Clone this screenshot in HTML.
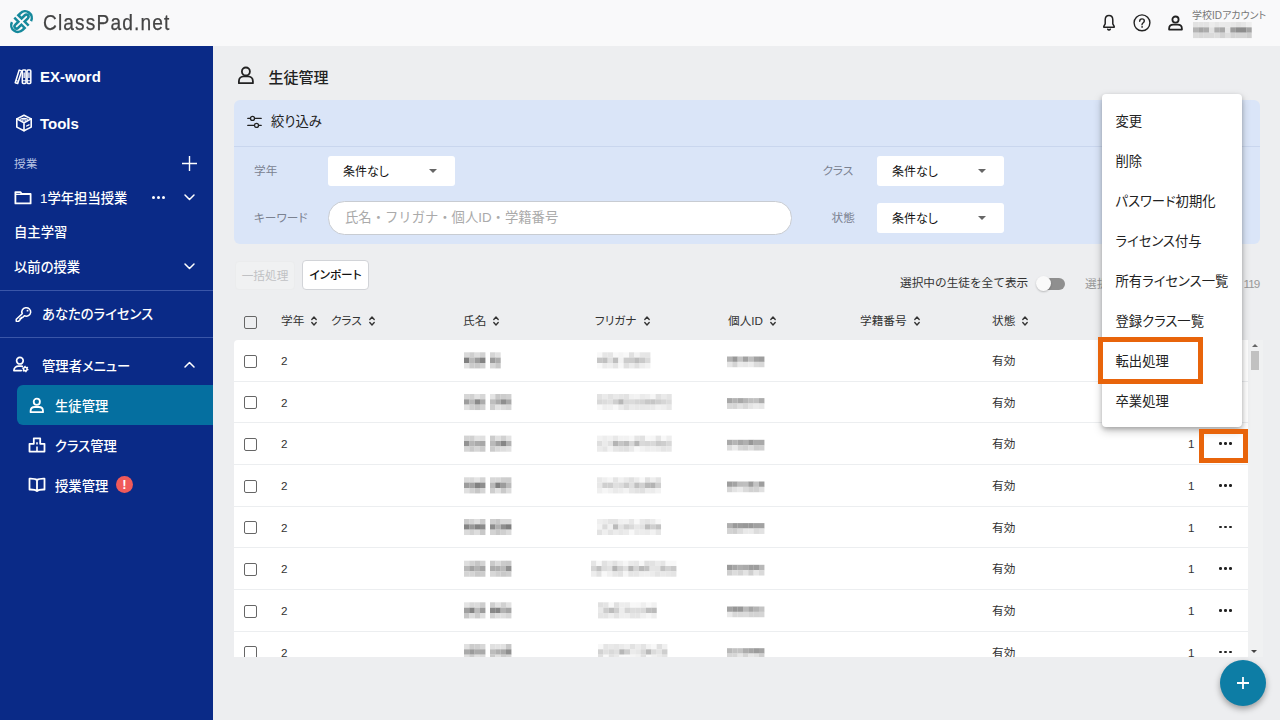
<!DOCTYPE html>
<html lang="ja">
<head>
<meta charset="utf-8">
<title>ClassPad.net</title>
<style>
*{box-sizing:border-box;margin:0;padding:0}
html,body{width:1280px;height:720px;overflow:hidden}
body{position:relative;background:#edeef0;font-family:"Liberation Sans","Noto Sans CJK JP",sans-serif;color:#222;font-size:13px;font-feature-settings:"palt"}
.abs{position:absolute}
.t{position:absolute;white-space:nowrap;line-height:1}
svg{position:absolute;overflow:visible}
/* header */
#hdr{left:0;top:0;width:1280px;height:46px;background:#f9f9fa}
#logo{left:43px;top:12px;font-size:22px;color:#444;-webkit-text-stroke:.25px #444;letter-spacing:1.3px;transform:scaleX(.87);transform-origin:0 0}
/* sidebar */
#side{left:0;top:46px;width:213px;height:674px;background:#0a2a87}
#side .t{color:#fff}
.sb{font-weight:bold;font-size:15px}
.sj{font-size:13.33px;font-weight:500;margin-top:2px}
.hr{position:absolute;left:0;width:213px;height:1px;background:#3a56a8}
#active{left:17px;top:385px;width:196px;height:40px;background:#056fa0;border-radius:6px 0 0 6px}
/* main */
#title{left:268.400px;top:69.500px;font-size:15px;color:#222;font-weight:500}
#filter{left:234px;top:100px;width:1026px;height:143.500px;background:#dae5f8;border-radius:6px}
#fdiv{left:234px;top:146px;width:1026px;height:1px;background:#c9d6ee}
.lbl{font-size:11.67px;color:#7b8291}
.sel{position:absolute;width:127px;height:30px;background:#fff;border-radius:3px}
.sel .t{left:15px;top:9.800px;font-size:12px;color:#111}
.sel i{position:absolute;left:100.500px;top:12.500px;border:4px solid transparent;border-top:4px solid #666;border-bottom:0}
#search{left:328px;top:201px;width:464px;height:33.500px;background:#fff;border:1px solid #c8ccd2;border-radius:16.5px}
#search .t{font-feature-settings:normal;left:16px;top:8.500px;font-size:13.33px;color:#aaa}
.btn{position:absolute;height:29px;border-radius:4px;font-size:11.67px;text-align:center;line-height:27px;white-space:nowrap}
/* table */
#tbl{left:234px;top:340px;width:1014px;height:317px;background:#fff;overflow:hidden;border-radius:4px 0 0 0}
.row{position:absolute;left:0;width:1014px;height:41.7px;border-bottom:1px solid #eceef0}
.cb{position:absolute;width:13px;height:13px;border:1.5px solid #666;border-radius:2px;background:#fff}
.th{font-size:11.67px;color:#333}
.td{font-size:11.67px;color:#333}
.blur{position:absolute;filter:blur(1.5px)}
.mos{filter:blur(.6px)}
/* menu */
#menu{left:1102px;top:94px;width:140px;height:333px;background:#fff;border-radius:4px;box-shadow:0 4px 10px rgba(0,0,0,.22),0 2px 4px rgba(0,0,0,.2)}
#menu .t{left:13.500px;font-size:13.330px;color:#222}
.ob{position:absolute;border:5px solid #e8640b}
#fab{left:1220px;top:660px;width:46px;height:46px;border-radius:50%;background:#0d7da5;box-shadow:0 3px 6px rgba(0,0,0,.35)}
.sa{display:inline-block;position:relative;width:6px;height:10px;margin-left:7px;vertical-align:-1px}
.sa svg{left:0;top:0}
.dots{position:absolute;width:14px;height:3px}
.dots b{position:absolute;top:0;width:2.6px;height:2.6px;border-radius:50%;background:#222}
.dots.w b{background:#fff;width:3.2px;height:3.2px}.dots b:nth-child(1){left:0}.dots b:nth-child(2){left:5px}.dots b:nth-child(3){left:10px}
</style>
</head>
<body>
<!-- HEADER -->
<div id="hdr" class="abs"></div>
<svg style="left:0;top:0" width="46" height="46" viewBox="0 0 46 46" fill="none" stroke="#16899c" stroke-width="2.35" stroke-linejoin="miter">
<g transform="translate(21.5,21.6) rotate(-45) scale(1.07)"><path id="lk" d="M2.1 7.4V2H6.4A2 2 0 0 0 6.400-2H2.100V-6.300H4.700A6.300 6.300 0 0 1 6.600 6"/><path d="M2.1 7.4V2H6.4A2 2 0 0 0 6.400-2H2.100V-6.300H4.700A6.300 6.300 0 0 1 6.600 6" transform="rotate(180)"/></g>
</svg>
<div id="logo" class="t">ClassPad.net</div>
<!-- bell -->
<svg style="left:1101.500px;top:14px" width="14" height="18" viewBox="0 0 14 18" fill="none" stroke="#222" stroke-width="1.500" stroke-linejoin="round" stroke-linecap="round">
<path d="M7 1.600c-2.400 0-3.800 1.900-3.800 4.400v3.800L1.800 12.400v.8h10.400v-.8L10.800 9.800V6c0-2.500-1.400-4.400-3.800-4.400z"/><path d="M5.700 15.200c.3.600.7.900 1.300.9s1-.3 1.300-.9"/>
</svg>
<!-- help -->
<svg style="left:1133px;top:14px" width="18" height="18" viewBox="0 0 18 18" fill="none" stroke="#222" stroke-width="1.400" stroke-linecap="round">
<circle cx="9" cy="8.800" r="7.900"/><path d="M6.7 7.2c0-1.4 1-2.3 2.3-2.3s2.3.9 2.3 2.1c0 1.7-2.3 1.8-2.3 3.7"/><circle cx="9" cy="12.9" r=".5" fill="#222" stroke-width=".6"/>
</svg>
<!-- user -->
<svg style="left:1166.600px;top:15.300px" width="17" height="17" viewBox="0 0 17 17" fill="none" stroke="#222" stroke-width="1.800" stroke-linejoin="round">
<circle cx="8.500" cy="4.600" r="3.100"/><path d="M2.100 14.600v-.9c0-2.600 2-4 4.200-4h4.400c2.200 0 4.200 1.400 4.200 4v.9z"/>
</svg>
<div class="t" style="left:1192px;top:11px;font-size:10px;color:#777">学校IDアカウント</div>
<svg class="mos" style="left:1192.500px;top:21.500px" width="59" height="16" viewBox="0 0 59 16"><rect x="0.00" y="0.00" width="5.43" height="5.43" fill="rgb(226,226,226)"/><rect x="5.33" y="0.00" width="5.43" height="5.43" fill="rgb(227,227,227)"/><rect x="10.66" y="0.00" width="5.43" height="5.43" fill="rgb(227,227,227)"/><rect x="15.99" y="0.00" width="5.43" height="5.43" fill="rgb(236,236,236)"/><rect x="21.32" y="0.00" width="5.43" height="5.43" fill="rgb(230,230,230)"/><rect x="26.65" y="0.00" width="5.43" height="5.43" fill="rgb(234,234,234)"/><rect x="31.98" y="0.00" width="5.43" height="5.43" fill="rgb(233,233,233)"/><rect x="37.31" y="0.00" width="5.43" height="5.43" fill="rgb(231,231,231)"/><rect x="42.64" y="0.00" width="5.43" height="5.43" fill="rgb(226,226,226)"/><rect x="47.97" y="0.00" width="5.43" height="5.43" fill="rgb(230,230,230)"/><rect x="53.30" y="0.00" width="5.43" height="5.43" fill="rgb(238,238,238)"/><rect x="0.00" y="5.33" width="5.43" height="5.43" fill="rgb(180,180,180)"/><rect x="5.33" y="5.33" width="5.43" height="5.43" fill="rgb(165,165,165)"/><rect x="10.66" y="5.33" width="5.43" height="5.43" fill="rgb(172,172,172)"/><rect x="15.99" y="5.33" width="5.43" height="5.43" fill="rgb(226,226,226)"/><rect x="21.32" y="5.33" width="5.43" height="5.43" fill="rgb(174,174,174)"/><rect x="26.65" y="5.33" width="5.43" height="5.43" fill="rgb(168,168,168)"/><rect x="31.98" y="5.33" width="5.43" height="5.43" fill="rgb(231,231,231)"/><rect x="37.31" y="5.33" width="5.43" height="5.43" fill="rgb(157,157,157)"/><rect x="42.64" y="5.33" width="5.43" height="5.43" fill="rgb(142,142,142)"/><rect x="47.97" y="5.33" width="5.43" height="5.43" fill="rgb(141,141,141)"/><rect x="53.30" y="5.33" width="5.43" height="5.43" fill="rgb(163,163,163)"/><rect x="0.00" y="10.66" width="5.43" height="5.43" fill="rgb(219,219,219)"/><rect x="5.33" y="10.66" width="5.43" height="5.43" fill="rgb(215,215,215)"/><rect x="10.66" y="10.66" width="5.43" height="5.43" fill="rgb(217,217,217)"/><rect x="15.99" y="10.66" width="5.43" height="5.43" fill="rgb(218,218,218)"/><rect x="21.32" y="10.66" width="5.43" height="5.43" fill="rgb(221,221,221)"/><rect x="26.65" y="10.66" width="5.43" height="5.43" fill="rgb(210,210,210)"/><rect x="31.98" y="10.66" width="5.43" height="5.43" fill="rgb(222,222,222)"/><rect x="37.31" y="10.66" width="5.43" height="5.43" fill="rgb(210,210,210)"/><rect x="42.64" y="10.66" width="5.43" height="5.43" fill="rgb(212,212,212)"/><rect x="47.97" y="10.66" width="5.43" height="5.43" fill="rgb(212,212,212)"/><rect x="53.30" y="10.66" width="5.43" height="5.43" fill="rgb(205,205,205)"/></svg>
<!-- SIDEBAR -->
<div id="side" class="abs">
<!-- exword icon -->
<svg style="left:14.3px;top:23px" width="18" height="16" viewBox="0 0 18 16" fill="none" stroke="#fff" stroke-width="1.5" stroke-linejoin="round">
<path d="M5.2 1.100l2.500.800-4 12.600-2.500-.800z"/><path d="M1.900 11.400l2.500.800" stroke-width="1.100"/><rect x="8.300" y="1.100" width="3.700" height="13.400" rx=".9"/><rect x="13.100" y="1.100" width="3.700" height="13.400" rx=".9"/><path d="M8.300 11.800h3.700M13.100 11.800h3.700" stroke-width="1.100"/><path d="M10.150 3.600v5.400M14.950 3.600v5.400" stroke-width="1.300"/>
</svg>
<div class="t sb" style="left:40px;top:23px">EX-word</div>
<!-- tools icon -->
<svg style="left:15px;top:68px" width="18" height="18" viewBox="0 0 18 18" fill="none" stroke="#fff" stroke-width="1.600" stroke-linejoin="round" stroke-linecap="round">
<path d="M9 1.300l7.200 3.600v8.200L9 16.700l-7.200-3.600V4.900z"/><path d="M1.800 4.900L9 8.700l7.200-3.800M9 8.700v8"/><path d="M5.300 5.300a5.200 2.700 0 0 1 7.400 0M7.100 6.300a2.700 1.400 0 0 1 3.800 0" stroke-width="1.100"/><path d="M11.600 12l2.400-1.200" stroke-width="1.300"/>
</svg>
<div class="t sb" style="left:40px;top:70px">Tools</div>
<div class="t" style="left:14px;top:112px;font-size:11.67px;color:#b9c3e3">授業</div>
<svg style="left:182px;top:110px" width="15" height="15" viewBox="0 0 15 15" stroke="#fff" stroke-width="1.4"><path d="M7.5 0v15M0 7.5h15"/></svg>
<!-- folder -->
<svg style="left:14px;top:144px" width="18" height="15" viewBox="0 0 18 15" fill="none" stroke="#fff" stroke-width="1.800" stroke-linejoin="round">
<path d="M1.400 2.100h5l1.400 1.900h8.800v9.400H1.400z"/><path d="M1.400 4.300h7" stroke-width="1.400"/>
</svg>
<div class="t sj" style="left:40px;top:144px">1学年担当授業</div>
<div class="dots w" style="left:152px;top:149.500px"><b></b><b></b><b></b></div>
<svg style="left:184px;top:148px" width="11" height="7" viewBox="0 0 11 7" fill="none" stroke="#fff" stroke-width="1.5" stroke-linecap="round" stroke-linejoin="round"><path d="M1 1l4.5 4.5L10 1"/></svg>
<div class="t sj" style="left:14px;top:178px">自主学習</div>
<div class="t sj" style="left:14px;top:213px">以前の授業</div>
<svg style="left:184px;top:217px" width="11" height="7" viewBox="0 0 11 7" fill="none" stroke="#fff" stroke-width="1.5" stroke-linecap="round" stroke-linejoin="round"><path d="M1 1l4.5 4.5L10 1"/></svg>
<div class="hr" style="top:244px"></div>
<!-- key -->
<svg style="left:14.5px;top:260px" width="18" height="18" viewBox="0 0 18 18" fill="none" stroke="#fff" stroke-width="1.600" stroke-linejoin="round">
<g transform="scale(.97 .92)"><path d="M7.420 8.320A4.600 4.600 0 1 1 9.680 10.580L7.900 12.400H6.600V13.700H5.300V15L3.600 16.700H1.300V14.400Z"/><circle cx="12.900" cy="5.100" r="1" fill="#fff" stroke="none"/></g>
</svg>
<div class="t sj" style="left:42px;top:260px">あなたのライセンス</div>
<div class="hr" style="top:291px"></div>
<!-- admin icon -->
<svg style="left:12px;top:309px" width="18" height="18" viewBox="0 0 18 18" fill="none" stroke="#fff" stroke-width="1.700" stroke-linejoin="round" stroke-linecap="round">
<circle cx="7.900" cy="5.700" r="3.300"/><path d="M10.400 11.300c-.5-.1-1-.2-1.500-.2H6.800c-2.800 0-4.900 1.900-4.900 4.500h7.300"/>
<circle cx="13.300" cy="14" r="2.500" stroke-width="1.500" stroke-dasharray="1.300 1.320" stroke-linecap="butt"/><circle cx="13.300" cy="14" r="1.800" stroke-width="1.500"/>
</svg>
<div class="t sj" style="left:42px;top:312px">管理者メニュー</div>
<svg style="left:184px;top:315px" width="11" height="7" viewBox="0 0 11 7" fill="none" stroke="#fff" stroke-width="1.5" stroke-linecap="round" stroke-linejoin="round"><path d="M1 6l4.5-4.5L10 6"/></svg>
<div id="active" class="abs" style="top:339px"></div>
<svg style="left:29px;top:351px" width="16" height="17" viewBox="0 0 16 17" fill="none" stroke="#fff" stroke-width="1.800" stroke-linejoin="round">
<circle cx="7.800" cy="4.800" r="3.100"/><path d="M1.600 15.200v-1.200c0-2.600 2-4 4.200-4h4c2.200 0 4.200 1.400 4.200 4v1.200z"/>
</svg>
<div class="t sj" style="left:55px;top:352px">生徒管理</div>
<!-- class icon -->
<svg style="left:28px;top:391px" width="18" height="16" viewBox="0 0 18 16" fill="none" stroke="#fff" stroke-width="1.800" stroke-linejoin="round">
<path d="M5.800 1.300h6.400v5.500h4.300v7.800H1.500V6.800h4.300z"/><path d="M9 14.600V9.500" stroke-width="1.600"/><path d="M9 5.200v2.400" stroke-width="1.600"/>
</svg>
<div class="t sj" style="left:55px;top:392px">クラス管理</div>
<!-- book icon -->
<svg style="left:28px;top:431px" width="18" height="16" viewBox="0 0 18 16" fill="none" stroke="#fff" stroke-width="1.800" stroke-linejoin="round">
<path d="M9 3C7.700 2 5.200 1.600 1.500 1.700v10.800c3.700-.1 6.200.300 7.500 1.500 1.300-1.200 3.800-1.600 7.500-1.500V1.700C12.800 1.600 10.300 2 9 3zM9 3v11"/>
</svg>
<div class="t sj" style="left:55px;top:432px">授業管理</div>
<div class="abs" style="left:116px;top:430px;width:17px;height:17px;border-radius:50%;background:#f05a5a"></div>
<div class="t" style="left:116px;top:432px;width:17px;text-align:center;font-size:13px;font-weight:bold">!</div>
</div>
<!-- MAIN -->
<svg style="left:237px;top:66px" width="18" height="19" viewBox="0 0 18 19" fill="none" stroke="#222" stroke-width="1.800" stroke-linejoin="round">
<circle cx="8.900" cy="5.500" r="4"/><path d="M1.900 17.200v-2c0-3 2.300-4.800 4.800-4.800h4.400c2.500 0 4.800 1.800 4.800 4.800v2z"/>
</svg>
<div id="title" class="t">生徒管理</div>
<div id="filter" class="abs"></div>
<div id="fdiv" class="abs"></div>
<!-- filter icon -->
<svg style="left:247px;top:115px" width="15" height="14" viewBox="0 0 15 14" fill="none" stroke="#222" stroke-width="1.3" stroke-linecap="round">
<path d="M.8 3.4h2.600M7.600 3.400h6.600M.8 10.400h6.600M11.600 10.400h2.600"/><circle cx="5.500" cy="3.400" r="2"/><circle cx="9.500" cy="10.400" r="2"/>
</svg>
<div class="t" style="left:271px;top:115px;font-size:13.33px;color:#222">絞り込み</div>
<div class="t lbl" style="left:254px;top:165px">学年</div>
<div class="sel" style="left:328px;top:156px"><div class="t">条件なし</div><i></i></div>
<div class="t lbl" style="left:254px;top:212px">キーワード</div>
<div id="search" class="abs"><div class="t">氏名・フリガナ・個人ID・学籍番号</div></div>
<div class="t lbl" style="left:822.500px;top:165px">クラス</div>
<div class="sel" style="left:877px;top:156px"><div class="t">条件なし</div><i></i></div>
<div class="t lbl" style="left:831.500px;top:211.500px">状態</div>
<div class="sel" style="left:877px;top:203px"><div class="t">条件なし</div><i></i></div>
<!-- buttons -->
<div class="btn" style="left:235px;top:261px;width:60px;background:#f0f1f2;color:#c0c1c4;border:1px solid #ebeced">一括処理</div>
<div class="btn" style="left:302px;top:260px;width:67px;height:30px;background:#fff;color:#111;border:1px solid #d2d4d8;line-height:28px;font-weight:500">インポート</div>
<div class="t" style="left:900px;top:277px;font-size:11.67px;color:#333;font-feature-settings:normal">選択中の生徒を全て表示</div>
<div class="abs" style="left:1040px;top:277.500px;width:25px;height:12px;border-radius:6px;background:#8f8f8f"></div>
<div class="abs" style="left:1035.500px;top:276px;width:15px;height:15px;border-radius:50%;background:#fafafa;box-shadow:0 1px 2px rgba(0,0,0,.22)"></div>
<div class="t" style="left:1085px;top:278px;font-size:11.670px;color:#999">選択中</div>
<div class="t" style="left:1243.500px;top:278px;font-size:11.670px;letter-spacing:-.9px;color:#999">119</div>
<!-- table header -->
<div class="cb" style="left:244px;top:316px;background:transparent"></div>
<div class="t th" style="left:281px;top:315px">学年<span class="sa"><svg width="6" height="10" viewBox="0 0 6 10" fill="none" stroke="#333" stroke-width="1.400" stroke-linecap="round" stroke-linejoin="round"><path d="M.8 3.400L3 1.100 5.200 3.400M.8 6.600L3 8.900 5.200 6.600"/></svg></span></div>
<div class="t th" style="left:331px;top:315px">クラス<span class="sa"><svg width="6" height="10" viewBox="0 0 6 10" fill="none" stroke="#333" stroke-width="1.400" stroke-linecap="round" stroke-linejoin="round"><path d="M.8 3.400L3 1.100 5.200 3.400M.8 6.600L3 8.900 5.200 6.600"/></svg></span></div>
<div class="t th" style="left:463px;top:315px">氏名<span class="sa"><svg width="6" height="10" viewBox="0 0 6 10" fill="none" stroke="#333" stroke-width="1.400" stroke-linecap="round" stroke-linejoin="round"><path d="M.8 3.400L3 1.100 5.200 3.400M.8 6.600L3 8.900 5.200 6.600"/></svg></span></div>
<div class="t th" style="left:595px;top:315px">フリガナ<span class="sa"><svg width="6" height="10" viewBox="0 0 6 10" fill="none" stroke="#333" stroke-width="1.400" stroke-linecap="round" stroke-linejoin="round"><path d="M.8 3.400L3 1.100 5.200 3.400M.8 6.600L3 8.900 5.200 6.600"/></svg></span></div>
<div class="t th" style="left:728px;top:315px">個人ID<span class="sa"><svg width="6" height="10" viewBox="0 0 6 10" fill="none" stroke="#333" stroke-width="1.400" stroke-linecap="round" stroke-linejoin="round"><path d="M.8 3.400L3 1.100 5.200 3.400M.8 6.600L3 8.900 5.200 6.600"/></svg></span></div>
<div class="t th" style="left:860px;top:315px">学籍番号<span class="sa"><svg width="6" height="10" viewBox="0 0 6 10" fill="none" stroke="#333" stroke-width="1.400" stroke-linecap="round" stroke-linejoin="round"><path d="M.8 3.400L3 1.100 5.200 3.400M.8 6.600L3 8.900 5.200 6.600"/></svg></span></div>
<div class="t th" style="left:992px;top:315px">状態<span class="sa"><svg width="6" height="10" viewBox="0 0 6 10" fill="none" stroke="#333" stroke-width="1.400" stroke-linecap="round" stroke-linejoin="round"><path d="M.8 3.400L3 1.100 5.200 3.400M.8 6.600L3 8.900 5.200 6.600"/></svg></span></div>
<div id="tbl" class="abs">
<svg class="mos" style="left:0;top:0" width="1012" height="330" viewBox="0 0 1012 330"><rect x="230.0" y="12.3" width="5.43" height="5.43" fill="rgb(217,217,217)"/><rect x="235.3" y="12.3" width="5.43" height="5.43" fill="rgb(206,206,206)"/><rect x="240.7" y="12.3" width="5.43" height="5.43" fill="rgb(221,221,221)"/><rect x="246.0" y="12.3" width="5.43" height="5.43" fill="rgb(209,209,209)"/><rect x="230.0" y="17.6" width="5.43" height="5.43" fill="rgb(128,128,128)"/><rect x="235.3" y="17.6" width="5.43" height="5.43" fill="rgb(184,184,184)"/><rect x="240.7" y="17.6" width="5.43" height="5.43" fill="rgb(156,156,156)"/><rect x="246.0" y="17.6" width="5.43" height="5.43" fill="rgb(131,131,131)"/><rect x="230.0" y="23.0" width="5.43" height="5.43" fill="rgb(226,226,226)"/><rect x="235.3" y="23.0" width="5.43" height="5.43" fill="rgb(203,203,203)"/><rect x="240.7" y="23.0" width="5.43" height="5.43" fill="rgb(201,201,201)"/><rect x="246.0" y="23.0" width="5.43" height="5.43" fill="rgb(209,209,209)"/><rect x="256.0" y="12.3" width="5.43" height="5.43" fill="rgb(213,213,213)"/><rect x="261.3" y="12.3" width="5.43" height="5.43" fill="rgb(225,225,225)"/><rect x="256.0" y="17.6" width="5.43" height="5.43" fill="rgb(156,156,156)"/><rect x="261.3" y="17.6" width="5.43" height="5.43" fill="rgb(173,173,173)"/><rect x="256.0" y="23.0" width="5.43" height="5.43" fill="rgb(215,215,215)"/><rect x="261.3" y="23.0" width="5.43" height="5.43" fill="rgb(201,201,201)"/><rect x="363.0" y="12.3" width="5.43" height="5.43" fill="rgb(248,248,248)"/><rect x="368.3" y="12.3" width="5.43" height="5.43" fill="rgb(230,230,230)"/><rect x="373.7" y="12.3" width="5.43" height="5.43" fill="rgb(229,229,229)"/><rect x="379.0" y="12.3" width="5.43" height="5.43" fill="rgb(248,248,248)"/><rect x="384.3" y="12.3" width="5.43" height="5.43" fill="rgb(244,244,244)"/><rect x="389.6" y="12.3" width="5.43" height="5.43" fill="rgb(248,248,248)"/><rect x="395.0" y="12.3" width="5.43" height="5.43" fill="rgb(224,224,224)"/><rect x="400.3" y="12.3" width="5.43" height="5.43" fill="rgb(242,242,242)"/><rect x="405.6" y="12.3" width="5.43" height="5.43" fill="rgb(230,230,230)"/><rect x="411.0" y="12.3" width="5.43" height="5.43" fill="rgb(229,229,229)"/><rect x="363.0" y="17.6" width="5.43" height="5.43" fill="rgb(198,198,198)"/><rect x="368.3" y="17.6" width="5.43" height="5.43" fill="rgb(192,192,192)"/><rect x="373.7" y="17.6" width="5.43" height="5.43" fill="rgb(223,223,223)"/><rect x="379.0" y="17.6" width="5.43" height="5.43" fill="rgb(191,191,191)"/><rect x="384.3" y="17.6" width="5.43" height="5.43" fill="rgb(242,242,242)"/><rect x="389.6" y="17.6" width="5.43" height="5.43" fill="rgb(204,204,204)"/><rect x="395.0" y="17.6" width="5.43" height="5.43" fill="rgb(203,203,203)"/><rect x="400.3" y="17.6" width="5.43" height="5.43" fill="rgb(189,189,189)"/><rect x="405.6" y="17.6" width="5.43" height="5.43" fill="rgb(201,201,201)"/><rect x="411.0" y="17.6" width="5.43" height="5.43" fill="rgb(218,218,218)"/><rect x="363.0" y="23.0" width="5.43" height="5.43" fill="rgb(248,248,248)"/><rect x="368.3" y="23.0" width="5.43" height="5.43" fill="rgb(235,235,235)"/><rect x="373.7" y="23.0" width="5.43" height="5.43" fill="rgb(239,239,239)"/><rect x="379.0" y="23.0" width="5.43" height="5.43" fill="rgb(229,229,229)"/><rect x="384.3" y="23.0" width="5.43" height="5.43" fill="rgb(247,247,247)"/><rect x="389.6" y="23.0" width="5.43" height="5.43" fill="rgb(224,224,224)"/><rect x="395.0" y="23.0" width="5.43" height="5.43" fill="rgb(235,235,235)"/><rect x="400.3" y="23.0" width="5.43" height="5.43" fill="rgb(224,224,224)"/><rect x="405.6" y="23.0" width="5.43" height="5.43" fill="rgb(237,237,237)"/><rect x="411.0" y="23.0" width="5.43" height="5.43" fill="rgb(242,242,242)"/><rect x="493.0" y="16.5" width="5.43" height="5.43" fill="rgb(178,178,178)"/><rect x="498.3" y="16.5" width="5.43" height="5.43" fill="rgb(152,152,152)"/><rect x="503.7" y="16.5" width="5.43" height="5.43" fill="rgb(195,195,195)"/><rect x="509.0" y="16.5" width="5.43" height="5.43" fill="rgb(161,161,161)"/><rect x="514.3" y="16.5" width="5.43" height="5.43" fill="rgb(189,189,189)"/><rect x="519.6" y="16.5" width="5.43" height="5.43" fill="rgb(162,162,162)"/><rect x="525.0" y="16.5" width="5.43" height="5.43" fill="rgb(157,157,157)"/><rect x="493.0" y="21.8" width="5.43" height="5.43" fill="rgb(229,229,229)"/><rect x="498.3" y="21.8" width="5.43" height="5.43" fill="rgb(212,212,212)"/><rect x="503.7" y="21.8" width="5.43" height="5.43" fill="rgb(234,234,234)"/><rect x="509.0" y="21.8" width="5.43" height="5.43" fill="rgb(231,231,231)"/><rect x="514.3" y="21.8" width="5.43" height="5.43" fill="rgb(235,235,235)"/><rect x="519.6" y="21.8" width="5.43" height="5.43" fill="rgb(219,219,219)"/><rect x="525.0" y="21.8" width="5.43" height="5.43" fill="rgb(216,216,216)"/><rect x="230.0" y="54.0" width="5.43" height="5.43" fill="rgb(214,214,214)"/><rect x="235.3" y="54.0" width="5.43" height="5.43" fill="rgb(209,209,209)"/><rect x="240.7" y="54.0" width="5.43" height="5.43" fill="rgb(226,226,226)"/><rect x="246.0" y="54.0" width="5.43" height="5.43" fill="rgb(214,214,214)"/><rect x="230.0" y="59.3" width="5.43" height="5.43" fill="rgb(157,157,157)"/><rect x="235.3" y="59.3" width="5.43" height="5.43" fill="rgb(184,184,184)"/><rect x="240.7" y="59.3" width="5.43" height="5.43" fill="rgb(138,138,138)"/><rect x="246.0" y="59.3" width="5.43" height="5.43" fill="rgb(172,172,172)"/><rect x="230.0" y="64.6" width="5.43" height="5.43" fill="rgb(225,225,225)"/><rect x="235.3" y="64.6" width="5.43" height="5.43" fill="rgb(207,207,207)"/><rect x="240.7" y="64.6" width="5.43" height="5.43" fill="rgb(199,199,199)"/><rect x="246.0" y="64.6" width="5.43" height="5.43" fill="rgb(211,211,211)"/><rect x="256.0" y="54.0" width="5.43" height="5.43" fill="rgb(228,228,228)"/><rect x="261.3" y="54.0" width="5.43" height="5.43" fill="rgb(200,200,200)"/><rect x="266.7" y="54.0" width="5.43" height="5.43" fill="rgb(204,204,204)"/><rect x="272.0" y="54.0" width="5.43" height="5.43" fill="rgb(208,208,208)"/><rect x="256.0" y="59.3" width="5.43" height="5.43" fill="rgb(190,190,190)"/><rect x="261.3" y="59.3" width="5.43" height="5.43" fill="rgb(171,171,171)"/><rect x="266.7" y="59.3" width="5.43" height="5.43" fill="rgb(143,143,143)"/><rect x="272.0" y="59.3" width="5.43" height="5.43" fill="rgb(168,168,168)"/><rect x="256.0" y="64.6" width="5.43" height="5.43" fill="rgb(206,206,206)"/><rect x="261.3" y="64.6" width="5.43" height="5.43" fill="rgb(227,227,227)"/><rect x="266.7" y="64.6" width="5.43" height="5.43" fill="rgb(220,220,220)"/><rect x="272.0" y="64.6" width="5.43" height="5.43" fill="rgb(215,215,215)"/><rect x="363.0" y="54.0" width="5.43" height="5.43" fill="rgb(226,226,226)"/><rect x="368.3" y="54.0" width="5.43" height="5.43" fill="rgb(234,234,234)"/><rect x="373.7" y="54.0" width="5.43" height="5.43" fill="rgb(226,226,226)"/><rect x="379.0" y="54.0" width="5.43" height="5.43" fill="rgb(233,233,233)"/><rect x="384.3" y="54.0" width="5.43" height="5.43" fill="rgb(229,229,229)"/><rect x="389.6" y="54.0" width="5.43" height="5.43" fill="rgb(226,226,226)"/><rect x="395.0" y="54.0" width="5.43" height="5.43" fill="rgb(241,241,241)"/><rect x="400.3" y="54.0" width="5.43" height="5.43" fill="rgb(243,243,243)"/><rect x="405.6" y="54.0" width="5.43" height="5.43" fill="rgb(235,235,235)"/><rect x="411.0" y="54.0" width="5.43" height="5.43" fill="rgb(238,238,238)"/><rect x="416.3" y="54.0" width="5.43" height="5.43" fill="rgb(246,246,246)"/><rect x="421.6" y="54.0" width="5.43" height="5.43" fill="rgb(225,225,225)"/><rect x="427.0" y="54.0" width="5.43" height="5.43" fill="rgb(234,234,234)"/><rect x="432.3" y="54.0" width="5.43" height="5.43" fill="rgb(228,228,228)"/><rect x="363.0" y="59.3" width="5.43" height="5.43" fill="rgb(216,216,216)"/><rect x="368.3" y="59.3" width="5.43" height="5.43" fill="rgb(220,220,220)"/><rect x="373.7" y="59.3" width="5.43" height="5.43" fill="rgb(224,224,224)"/><rect x="379.0" y="59.3" width="5.43" height="5.43" fill="rgb(207,207,207)"/><rect x="384.3" y="59.3" width="5.43" height="5.43" fill="rgb(183,183,183)"/><rect x="389.6" y="59.3" width="5.43" height="5.43" fill="rgb(216,216,216)"/><rect x="395.0" y="59.3" width="5.43" height="5.43" fill="rgb(219,219,219)"/><rect x="400.3" y="59.3" width="5.43" height="5.43" fill="rgb(213,213,213)"/><rect x="405.6" y="59.3" width="5.43" height="5.43" fill="rgb(211,211,211)"/><rect x="411.0" y="59.3" width="5.43" height="5.43" fill="rgb(200,200,200)"/><rect x="416.3" y="59.3" width="5.43" height="5.43" fill="rgb(198,198,198)"/><rect x="421.6" y="59.3" width="5.43" height="5.43" fill="rgb(207,207,207)"/><rect x="427.0" y="59.3" width="5.43" height="5.43" fill="rgb(214,214,214)"/><rect x="432.3" y="59.3" width="5.43" height="5.43" fill="rgb(220,220,220)"/><rect x="363.0" y="64.6" width="5.43" height="5.43" fill="rgb(248,248,248)"/><rect x="368.3" y="64.6" width="5.43" height="5.43" fill="rgb(239,239,239)"/><rect x="373.7" y="64.6" width="5.43" height="5.43" fill="rgb(241,241,241)"/><rect x="379.0" y="64.6" width="5.43" height="5.43" fill="rgb(248,248,248)"/><rect x="384.3" y="64.6" width="5.43" height="5.43" fill="rgb(235,235,235)"/><rect x="389.6" y="64.6" width="5.43" height="5.43" fill="rgb(225,225,225)"/><rect x="395.0" y="64.6" width="5.43" height="5.43" fill="rgb(235,235,235)"/><rect x="400.3" y="64.6" width="5.43" height="5.43" fill="rgb(232,232,232)"/><rect x="405.6" y="64.6" width="5.43" height="5.43" fill="rgb(232,232,232)"/><rect x="411.0" y="64.6" width="5.43" height="5.43" fill="rgb(233,233,233)"/><rect x="416.3" y="64.6" width="5.43" height="5.43" fill="rgb(234,234,234)"/><rect x="421.6" y="64.6" width="5.43" height="5.43" fill="rgb(242,242,242)"/><rect x="427.0" y="64.6" width="5.43" height="5.43" fill="rgb(239,239,239)"/><rect x="432.3" y="64.6" width="5.43" height="5.43" fill="rgb(232,232,232)"/><rect x="493.0" y="58.1" width="5.43" height="5.43" fill="rgb(167,167,167)"/><rect x="498.3" y="58.1" width="5.43" height="5.43" fill="rgb(179,179,179)"/><rect x="503.7" y="58.1" width="5.43" height="5.43" fill="rgb(168,168,168)"/><rect x="509.0" y="58.1" width="5.43" height="5.43" fill="rgb(182,182,182)"/><rect x="514.3" y="58.1" width="5.43" height="5.43" fill="rgb(191,191,191)"/><rect x="519.6" y="58.1" width="5.43" height="5.43" fill="rgb(193,193,193)"/><rect x="525.0" y="58.1" width="5.43" height="5.43" fill="rgb(172,172,172)"/><rect x="493.0" y="63.5" width="5.43" height="5.43" fill="rgb(216,216,216)"/><rect x="498.3" y="63.5" width="5.43" height="5.43" fill="rgb(213,213,213)"/><rect x="503.7" y="63.5" width="5.43" height="5.43" fill="rgb(225,225,225)"/><rect x="509.0" y="63.5" width="5.43" height="5.43" fill="rgb(216,216,216)"/><rect x="514.3" y="63.5" width="5.43" height="5.43" fill="rgb(228,228,228)"/><rect x="519.6" y="63.5" width="5.43" height="5.43" fill="rgb(235,235,235)"/><rect x="525.0" y="63.5" width="5.43" height="5.43" fill="rgb(231,231,231)"/><rect x="230.0" y="95.6" width="5.43" height="5.43" fill="rgb(211,211,211)"/><rect x="235.3" y="95.6" width="5.43" height="5.43" fill="rgb(209,209,209)"/><rect x="240.7" y="95.6" width="5.43" height="5.43" fill="rgb(227,227,227)"/><rect x="246.0" y="95.6" width="5.43" height="5.43" fill="rgb(224,224,224)"/><rect x="230.0" y="101.0" width="5.43" height="5.43" fill="rgb(147,147,147)"/><rect x="235.3" y="101.0" width="5.43" height="5.43" fill="rgb(182,182,182)"/><rect x="240.7" y="101.0" width="5.43" height="5.43" fill="rgb(171,171,171)"/><rect x="246.0" y="101.0" width="5.43" height="5.43" fill="rgb(167,167,167)"/><rect x="230.0" y="106.3" width="5.43" height="5.43" fill="rgb(214,214,214)"/><rect x="235.3" y="106.3" width="5.43" height="5.43" fill="rgb(202,202,202)"/><rect x="240.7" y="106.3" width="5.43" height="5.43" fill="rgb(214,214,214)"/><rect x="246.0" y="106.3" width="5.43" height="5.43" fill="rgb(203,203,203)"/><rect x="256.0" y="95.6" width="5.43" height="5.43" fill="rgb(204,204,204)"/><rect x="261.3" y="95.6" width="5.43" height="5.43" fill="rgb(224,224,224)"/><rect x="266.7" y="95.6" width="5.43" height="5.43" fill="rgb(209,209,209)"/><rect x="272.0" y="95.6" width="5.43" height="5.43" fill="rgb(227,227,227)"/><rect x="256.0" y="101.0" width="5.43" height="5.43" fill="rgb(186,186,186)"/><rect x="261.3" y="101.0" width="5.43" height="5.43" fill="rgb(161,161,161)"/><rect x="266.7" y="101.0" width="5.43" height="5.43" fill="rgb(135,135,135)"/><rect x="272.0" y="101.0" width="5.43" height="5.43" fill="rgb(178,178,178)"/><rect x="256.0" y="106.3" width="5.43" height="5.43" fill="rgb(203,203,203)"/><rect x="261.3" y="106.3" width="5.43" height="5.43" fill="rgb(217,217,217)"/><rect x="266.7" y="106.3" width="5.43" height="5.43" fill="rgb(222,222,222)"/><rect x="272.0" y="106.3" width="5.43" height="5.43" fill="rgb(227,227,227)"/><rect x="363.0" y="95.6" width="5.43" height="5.43" fill="rgb(242,242,242)"/><rect x="368.3" y="95.6" width="5.43" height="5.43" fill="rgb(237,237,237)"/><rect x="373.7" y="95.6" width="5.43" height="5.43" fill="rgb(241,241,241)"/><rect x="379.0" y="95.6" width="5.43" height="5.43" fill="rgb(232,232,232)"/><rect x="384.3" y="95.6" width="5.43" height="5.43" fill="rgb(242,242,242)"/><rect x="389.6" y="95.6" width="5.43" height="5.43" fill="rgb(242,242,242)"/><rect x="395.0" y="95.6" width="5.43" height="5.43" fill="rgb(247,247,247)"/><rect x="400.3" y="95.6" width="5.43" height="5.43" fill="rgb(229,229,229)"/><rect x="405.6" y="95.6" width="5.43" height="5.43" fill="rgb(225,225,225)"/><rect x="411.0" y="95.6" width="5.43" height="5.43" fill="rgb(248,248,248)"/><rect x="416.3" y="95.6" width="5.43" height="5.43" fill="rgb(246,246,246)"/><rect x="421.6" y="95.6" width="5.43" height="5.43" fill="rgb(229,229,229)"/><rect x="427.0" y="95.6" width="5.43" height="5.43" fill="rgb(248,248,248)"/><rect x="432.3" y="95.6" width="5.43" height="5.43" fill="rgb(238,238,238)"/><rect x="363.0" y="101.0" width="5.43" height="5.43" fill="rgb(222,222,222)"/><rect x="368.3" y="101.0" width="5.43" height="5.43" fill="rgb(235,235,235)"/><rect x="373.7" y="101.0" width="5.43" height="5.43" fill="rgb(225,225,225)"/><rect x="379.0" y="101.0" width="5.43" height="5.43" fill="rgb(180,180,180)"/><rect x="384.3" y="101.0" width="5.43" height="5.43" fill="rgb(197,197,197)"/><rect x="389.6" y="101.0" width="5.43" height="5.43" fill="rgb(187,187,187)"/><rect x="395.0" y="101.0" width="5.43" height="5.43" fill="rgb(215,215,215)"/><rect x="400.3" y="101.0" width="5.43" height="5.43" fill="rgb(182,182,182)"/><rect x="405.6" y="101.0" width="5.43" height="5.43" fill="rgb(217,217,217)"/><rect x="411.0" y="101.0" width="5.43" height="5.43" fill="rgb(214,214,214)"/><rect x="416.3" y="101.0" width="5.43" height="5.43" fill="rgb(217,217,217)"/><rect x="421.6" y="101.0" width="5.43" height="5.43" fill="rgb(202,202,202)"/><rect x="427.0" y="101.0" width="5.43" height="5.43" fill="rgb(206,206,206)"/><rect x="432.3" y="101.0" width="5.43" height="5.43" fill="rgb(216,216,216)"/><rect x="363.0" y="106.3" width="5.43" height="5.43" fill="rgb(235,235,235)"/><rect x="368.3" y="106.3" width="5.43" height="5.43" fill="rgb(229,229,229)"/><rect x="373.7" y="106.3" width="5.43" height="5.43" fill="rgb(242,242,242)"/><rect x="379.0" y="106.3" width="5.43" height="5.43" fill="rgb(230,230,230)"/><rect x="384.3" y="106.3" width="5.43" height="5.43" fill="rgb(226,226,226)"/><rect x="389.6" y="106.3" width="5.43" height="5.43" fill="rgb(224,224,224)"/><rect x="395.0" y="106.3" width="5.43" height="5.43" fill="rgb(234,234,234)"/><rect x="400.3" y="106.3" width="5.43" height="5.43" fill="rgb(248,248,248)"/><rect x="405.6" y="106.3" width="5.43" height="5.43" fill="rgb(242,242,242)"/><rect x="411.0" y="106.3" width="5.43" height="5.43" fill="rgb(237,237,237)"/><rect x="416.3" y="106.3" width="5.43" height="5.43" fill="rgb(239,239,239)"/><rect x="421.6" y="106.3" width="5.43" height="5.43" fill="rgb(236,236,236)"/><rect x="427.0" y="106.3" width="5.43" height="5.43" fill="rgb(229,229,229)"/><rect x="432.3" y="106.3" width="5.43" height="5.43" fill="rgb(232,232,232)"/><rect x="493.0" y="99.8" width="5.43" height="5.43" fill="rgb(169,169,169)"/><rect x="498.3" y="99.8" width="5.43" height="5.43" fill="rgb(181,181,181)"/><rect x="503.7" y="99.8" width="5.43" height="5.43" fill="rgb(166,166,166)"/><rect x="509.0" y="99.8" width="5.43" height="5.43" fill="rgb(176,176,176)"/><rect x="514.3" y="99.8" width="5.43" height="5.43" fill="rgb(151,151,151)"/><rect x="519.6" y="99.8" width="5.43" height="5.43" fill="rgb(170,170,170)"/><rect x="525.0" y="99.8" width="5.43" height="5.43" fill="rgb(169,169,169)"/><rect x="493.0" y="105.1" width="5.43" height="5.43" fill="rgb(220,220,220)"/><rect x="498.3" y="105.1" width="5.43" height="5.43" fill="rgb(234,234,234)"/><rect x="503.7" y="105.1" width="5.43" height="5.43" fill="rgb(214,214,214)"/><rect x="509.0" y="105.1" width="5.43" height="5.43" fill="rgb(209,209,209)"/><rect x="514.3" y="105.1" width="5.43" height="5.43" fill="rgb(220,220,220)"/><rect x="519.6" y="105.1" width="5.43" height="5.43" fill="rgb(205,205,205)"/><rect x="525.0" y="105.1" width="5.43" height="5.43" fill="rgb(208,208,208)"/><rect x="230.0" y="137.3" width="5.43" height="5.43" fill="rgb(219,219,219)"/><rect x="235.3" y="137.3" width="5.43" height="5.43" fill="rgb(217,217,217)"/><rect x="240.7" y="137.3" width="5.43" height="5.43" fill="rgb(228,228,228)"/><rect x="246.0" y="137.3" width="5.43" height="5.43" fill="rgb(212,212,212)"/><rect x="230.0" y="142.6" width="5.43" height="5.43" fill="rgb(156,156,156)"/><rect x="235.3" y="142.6" width="5.43" height="5.43" fill="rgb(162,162,162)"/><rect x="240.7" y="142.6" width="5.43" height="5.43" fill="rgb(130,130,130)"/><rect x="246.0" y="142.6" width="5.43" height="5.43" fill="rgb(142,142,142)"/><rect x="230.0" y="148.0" width="5.43" height="5.43" fill="rgb(224,224,224)"/><rect x="235.3" y="148.0" width="5.43" height="5.43" fill="rgb(210,210,210)"/><rect x="240.7" y="148.0" width="5.43" height="5.43" fill="rgb(198,198,198)"/><rect x="246.0" y="148.0" width="5.43" height="5.43" fill="rgb(213,213,213)"/><rect x="256.0" y="137.3" width="5.43" height="5.43" fill="rgb(215,215,215)"/><rect x="261.3" y="137.3" width="5.43" height="5.43" fill="rgb(215,215,215)"/><rect x="266.7" y="137.3" width="5.43" height="5.43" fill="rgb(206,206,206)"/><rect x="272.0" y="137.3" width="5.43" height="5.43" fill="rgb(205,205,205)"/><rect x="256.0" y="142.6" width="5.43" height="5.43" fill="rgb(185,185,185)"/><rect x="261.3" y="142.6" width="5.43" height="5.43" fill="rgb(129,129,129)"/><rect x="266.7" y="142.6" width="5.43" height="5.43" fill="rgb(156,156,156)"/><rect x="272.0" y="142.6" width="5.43" height="5.43" fill="rgb(187,187,187)"/><rect x="256.0" y="148.0" width="5.43" height="5.43" fill="rgb(206,206,206)"/><rect x="261.3" y="148.0" width="5.43" height="5.43" fill="rgb(225,225,225)"/><rect x="266.7" y="148.0" width="5.43" height="5.43" fill="rgb(202,202,202)"/><rect x="272.0" y="148.0" width="5.43" height="5.43" fill="rgb(221,221,221)"/><rect x="363.0" y="137.3" width="5.43" height="5.43" fill="rgb(233,233,233)"/><rect x="368.3" y="137.3" width="5.43" height="5.43" fill="rgb(239,239,239)"/><rect x="373.7" y="137.3" width="5.43" height="5.43" fill="rgb(245,245,245)"/><rect x="379.0" y="137.3" width="5.43" height="5.43" fill="rgb(228,228,228)"/><rect x="384.3" y="137.3" width="5.43" height="5.43" fill="rgb(241,241,241)"/><rect x="389.6" y="137.3" width="5.43" height="5.43" fill="rgb(233,233,233)"/><rect x="395.0" y="137.3" width="5.43" height="5.43" fill="rgb(224,224,224)"/><rect x="400.3" y="137.3" width="5.43" height="5.43" fill="rgb(235,235,235)"/><rect x="405.6" y="137.3" width="5.43" height="5.43" fill="rgb(248,248,248)"/><rect x="411.0" y="137.3" width="5.43" height="5.43" fill="rgb(224,224,224)"/><rect x="416.3" y="137.3" width="5.43" height="5.43" fill="rgb(238,238,238)"/><rect x="421.6" y="137.3" width="5.43" height="5.43" fill="rgb(227,227,227)"/><rect x="363.0" y="142.6" width="5.43" height="5.43" fill="rgb(232,232,232)"/><rect x="368.3" y="142.6" width="5.43" height="5.43" fill="rgb(207,207,207)"/><rect x="373.7" y="142.6" width="5.43" height="5.43" fill="rgb(207,207,207)"/><rect x="379.0" y="142.6" width="5.43" height="5.43" fill="rgb(224,224,224)"/><rect x="384.3" y="142.6" width="5.43" height="5.43" fill="rgb(220,220,220)"/><rect x="389.6" y="142.6" width="5.43" height="5.43" fill="rgb(204,204,204)"/><rect x="395.0" y="142.6" width="5.43" height="5.43" fill="rgb(223,223,223)"/><rect x="400.3" y="142.6" width="5.43" height="5.43" fill="rgb(192,192,192)"/><rect x="405.6" y="142.6" width="5.43" height="5.43" fill="rgb(209,209,209)"/><rect x="411.0" y="142.6" width="5.43" height="5.43" fill="rgb(184,184,184)"/><rect x="416.3" y="142.6" width="5.43" height="5.43" fill="rgb(180,180,180)"/><rect x="421.6" y="142.6" width="5.43" height="5.43" fill="rgb(207,207,207)"/><rect x="363.0" y="148.0" width="5.43" height="5.43" fill="rgb(239,239,239)"/><rect x="368.3" y="148.0" width="5.43" height="5.43" fill="rgb(246,246,246)"/><rect x="373.7" y="148.0" width="5.43" height="5.43" fill="rgb(241,241,241)"/><rect x="379.0" y="148.0" width="5.43" height="5.43" fill="rgb(234,234,234)"/><rect x="384.3" y="148.0" width="5.43" height="5.43" fill="rgb(237,237,237)"/><rect x="389.6" y="148.0" width="5.43" height="5.43" fill="rgb(243,243,243)"/><rect x="395.0" y="148.0" width="5.43" height="5.43" fill="rgb(231,231,231)"/><rect x="400.3" y="148.0" width="5.43" height="5.43" fill="rgb(226,226,226)"/><rect x="405.6" y="148.0" width="5.43" height="5.43" fill="rgb(224,224,224)"/><rect x="411.0" y="148.0" width="5.43" height="5.43" fill="rgb(237,237,237)"/><rect x="416.3" y="148.0" width="5.43" height="5.43" fill="rgb(236,236,236)"/><rect x="421.6" y="148.0" width="5.43" height="5.43" fill="rgb(243,243,243)"/><rect x="493.0" y="141.5" width="5.43" height="5.43" fill="rgb(157,157,157)"/><rect x="498.3" y="141.5" width="5.43" height="5.43" fill="rgb(164,164,164)"/><rect x="503.7" y="141.5" width="5.43" height="5.43" fill="rgb(189,189,189)"/><rect x="509.0" y="141.5" width="5.43" height="5.43" fill="rgb(191,191,191)"/><rect x="514.3" y="141.5" width="5.43" height="5.43" fill="rgb(157,157,157)"/><rect x="519.6" y="141.5" width="5.43" height="5.43" fill="rgb(195,195,195)"/><rect x="525.0" y="141.5" width="5.43" height="5.43" fill="rgb(158,158,158)"/><rect x="493.0" y="146.8" width="5.43" height="5.43" fill="rgb(214,214,214)"/><rect x="498.3" y="146.8" width="5.43" height="5.43" fill="rgb(227,227,227)"/><rect x="503.7" y="146.8" width="5.43" height="5.43" fill="rgb(234,234,234)"/><rect x="509.0" y="146.8" width="5.43" height="5.43" fill="rgb(219,219,219)"/><rect x="514.3" y="146.8" width="5.43" height="5.43" fill="rgb(209,209,209)"/><rect x="519.6" y="146.8" width="5.43" height="5.43" fill="rgb(210,210,210)"/><rect x="525.0" y="146.8" width="5.43" height="5.43" fill="rgb(224,224,224)"/><rect x="230.0" y="179.0" width="5.43" height="5.43" fill="rgb(203,203,203)"/><rect x="235.3" y="179.0" width="5.43" height="5.43" fill="rgb(211,211,211)"/><rect x="240.7" y="179.0" width="5.43" height="5.43" fill="rgb(223,223,223)"/><rect x="246.0" y="179.0" width="5.43" height="5.43" fill="rgb(203,203,203)"/><rect x="230.0" y="184.3" width="5.43" height="5.43" fill="rgb(133,133,133)"/><rect x="235.3" y="184.3" width="5.43" height="5.43" fill="rgb(152,152,152)"/><rect x="240.7" y="184.3" width="5.43" height="5.43" fill="rgb(130,130,130)"/><rect x="246.0" y="184.3" width="5.43" height="5.43" fill="rgb(138,138,138)"/><rect x="230.0" y="189.6" width="5.43" height="5.43" fill="rgb(219,219,219)"/><rect x="235.3" y="189.6" width="5.43" height="5.43" fill="rgb(210,210,210)"/><rect x="240.7" y="189.6" width="5.43" height="5.43" fill="rgb(221,221,221)"/><rect x="246.0" y="189.6" width="5.43" height="5.43" fill="rgb(200,200,200)"/><rect x="256.0" y="179.0" width="5.43" height="5.43" fill="rgb(206,206,206)"/><rect x="261.3" y="179.0" width="5.43" height="5.43" fill="rgb(199,199,199)"/><rect x="266.7" y="179.0" width="5.43" height="5.43" fill="rgb(216,216,216)"/><rect x="272.0" y="179.0" width="5.43" height="5.43" fill="rgb(216,216,216)"/><rect x="256.0" y="184.3" width="5.43" height="5.43" fill="rgb(140,140,140)"/><rect x="261.3" y="184.3" width="5.43" height="5.43" fill="rgb(176,176,176)"/><rect x="266.7" y="184.3" width="5.43" height="5.43" fill="rgb(142,142,142)"/><rect x="272.0" y="184.3" width="5.43" height="5.43" fill="rgb(126,126,126)"/><rect x="256.0" y="189.6" width="5.43" height="5.43" fill="rgb(211,211,211)"/><rect x="261.3" y="189.6" width="5.43" height="5.43" fill="rgb(200,200,200)"/><rect x="266.7" y="189.6" width="5.43" height="5.43" fill="rgb(208,208,208)"/><rect x="272.0" y="189.6" width="5.43" height="5.43" fill="rgb(219,219,219)"/><rect x="363.0" y="179.0" width="5.43" height="5.43" fill="rgb(239,239,239)"/><rect x="368.3" y="179.0" width="5.43" height="5.43" fill="rgb(235,235,235)"/><rect x="373.7" y="179.0" width="5.43" height="5.43" fill="rgb(228,228,228)"/><rect x="379.0" y="179.0" width="5.43" height="5.43" fill="rgb(228,228,228)"/><rect x="384.3" y="179.0" width="5.43" height="5.43" fill="rgb(240,240,240)"/><rect x="389.6" y="179.0" width="5.43" height="5.43" fill="rgb(241,241,241)"/><rect x="395.0" y="179.0" width="5.43" height="5.43" fill="rgb(231,231,231)"/><rect x="400.3" y="179.0" width="5.43" height="5.43" fill="rgb(248,248,248)"/><rect x="405.6" y="179.0" width="5.43" height="5.43" fill="rgb(233,233,233)"/><rect x="411.0" y="179.0" width="5.43" height="5.43" fill="rgb(228,228,228)"/><rect x="416.3" y="179.0" width="5.43" height="5.43" fill="rgb(235,235,235)"/><rect x="421.6" y="179.0" width="5.43" height="5.43" fill="rgb(248,248,248)"/><rect x="363.0" y="184.3" width="5.43" height="5.43" fill="rgb(243,243,243)"/><rect x="368.3" y="184.3" width="5.43" height="5.43" fill="rgb(219,219,219)"/><rect x="373.7" y="184.3" width="5.43" height="5.43" fill="rgb(240,240,240)"/><rect x="379.0" y="184.3" width="5.43" height="5.43" fill="rgb(187,187,187)"/><rect x="384.3" y="184.3" width="5.43" height="5.43" fill="rgb(227,227,227)"/><rect x="389.6" y="184.3" width="5.43" height="5.43" fill="rgb(209,209,209)"/><rect x="395.0" y="184.3" width="5.43" height="5.43" fill="rgb(218,218,218)"/><rect x="400.3" y="184.3" width="5.43" height="5.43" fill="rgb(231,231,231)"/><rect x="405.6" y="184.3" width="5.43" height="5.43" fill="rgb(226,226,226)"/><rect x="411.0" y="184.3" width="5.43" height="5.43" fill="rgb(189,189,189)"/><rect x="416.3" y="184.3" width="5.43" height="5.43" fill="rgb(207,207,207)"/><rect x="421.6" y="184.3" width="5.43" height="5.43" fill="rgb(194,194,194)"/><rect x="363.0" y="189.6" width="5.43" height="5.43" fill="rgb(226,226,226)"/><rect x="368.3" y="189.6" width="5.43" height="5.43" fill="rgb(239,239,239)"/><rect x="373.7" y="189.6" width="5.43" height="5.43" fill="rgb(228,228,228)"/><rect x="379.0" y="189.6" width="5.43" height="5.43" fill="rgb(236,236,236)"/><rect x="384.3" y="189.6" width="5.43" height="5.43" fill="rgb(231,231,231)"/><rect x="389.6" y="189.6" width="5.43" height="5.43" fill="rgb(235,235,235)"/><rect x="395.0" y="189.6" width="5.43" height="5.43" fill="rgb(248,248,248)"/><rect x="400.3" y="189.6" width="5.43" height="5.43" fill="rgb(235,235,235)"/><rect x="405.6" y="189.6" width="5.43" height="5.43" fill="rgb(237,237,237)"/><rect x="411.0" y="189.6" width="5.43" height="5.43" fill="rgb(235,235,235)"/><rect x="416.3" y="189.6" width="5.43" height="5.43" fill="rgb(242,242,242)"/><rect x="421.6" y="189.6" width="5.43" height="5.43" fill="rgb(230,230,230)"/><rect x="493.0" y="183.1" width="5.43" height="5.43" fill="rgb(175,175,175)"/><rect x="498.3" y="183.1" width="5.43" height="5.43" fill="rgb(154,154,154)"/><rect x="503.7" y="183.1" width="5.43" height="5.43" fill="rgb(156,156,156)"/><rect x="509.0" y="183.1" width="5.43" height="5.43" fill="rgb(152,152,152)"/><rect x="514.3" y="183.1" width="5.43" height="5.43" fill="rgb(152,152,152)"/><rect x="519.6" y="183.1" width="5.43" height="5.43" fill="rgb(161,161,161)"/><rect x="525.0" y="183.1" width="5.43" height="5.43" fill="rgb(162,162,162)"/><rect x="493.0" y="188.5" width="5.43" height="5.43" fill="rgb(211,211,211)"/><rect x="498.3" y="188.5" width="5.43" height="5.43" fill="rgb(206,206,206)"/><rect x="503.7" y="188.5" width="5.43" height="5.43" fill="rgb(220,220,220)"/><rect x="509.0" y="188.5" width="5.43" height="5.43" fill="rgb(233,233,233)"/><rect x="514.3" y="188.5" width="5.43" height="5.43" fill="rgb(234,234,234)"/><rect x="519.6" y="188.5" width="5.43" height="5.43" fill="rgb(220,220,220)"/><rect x="525.0" y="188.5" width="5.43" height="5.43" fill="rgb(226,226,226)"/><rect x="230.0" y="220.7" width="5.43" height="5.43" fill="rgb(222,222,222)"/><rect x="235.3" y="220.7" width="5.43" height="5.43" fill="rgb(209,209,209)"/><rect x="240.7" y="220.7" width="5.43" height="5.43" fill="rgb(198,198,198)"/><rect x="246.0" y="220.7" width="5.43" height="5.43" fill="rgb(211,211,211)"/><rect x="230.0" y="226.0" width="5.43" height="5.43" fill="rgb(185,185,185)"/><rect x="235.3" y="226.0" width="5.43" height="5.43" fill="rgb(163,163,163)"/><rect x="240.7" y="226.0" width="5.43" height="5.43" fill="rgb(179,179,179)"/><rect x="246.0" y="226.0" width="5.43" height="5.43" fill="rgb(166,166,166)"/><rect x="230.0" y="231.3" width="5.43" height="5.43" fill="rgb(212,212,212)"/><rect x="235.3" y="231.3" width="5.43" height="5.43" fill="rgb(212,212,212)"/><rect x="240.7" y="231.3" width="5.43" height="5.43" fill="rgb(201,201,201)"/><rect x="246.0" y="231.3" width="5.43" height="5.43" fill="rgb(204,204,204)"/><rect x="256.0" y="220.7" width="5.43" height="5.43" fill="rgb(202,202,202)"/><rect x="261.3" y="220.7" width="5.43" height="5.43" fill="rgb(218,218,218)"/><rect x="266.7" y="220.7" width="5.43" height="5.43" fill="rgb(203,203,203)"/><rect x="272.0" y="220.7" width="5.43" height="5.43" fill="rgb(200,200,200)"/><rect x="256.0" y="226.0" width="5.43" height="5.43" fill="rgb(172,172,172)"/><rect x="261.3" y="226.0" width="5.43" height="5.43" fill="rgb(174,174,174)"/><rect x="266.7" y="226.0" width="5.43" height="5.43" fill="rgb(185,185,185)"/><rect x="272.0" y="226.0" width="5.43" height="5.43" fill="rgb(144,144,144)"/><rect x="256.0" y="231.3" width="5.43" height="5.43" fill="rgb(215,215,215)"/><rect x="261.3" y="231.3" width="5.43" height="5.43" fill="rgb(206,206,206)"/><rect x="266.7" y="231.3" width="5.43" height="5.43" fill="rgb(201,201,201)"/><rect x="272.0" y="231.3" width="5.43" height="5.43" fill="rgb(206,206,206)"/><rect x="357.0" y="220.7" width="5.43" height="5.43" fill="rgb(229,229,229)"/><rect x="362.3" y="220.7" width="5.43" height="5.43" fill="rgb(248,248,248)"/><rect x="367.7" y="220.7" width="5.43" height="5.43" fill="rgb(225,225,225)"/><rect x="373.0" y="220.7" width="5.43" height="5.43" fill="rgb(235,235,235)"/><rect x="378.3" y="220.7" width="5.43" height="5.43" fill="rgb(225,225,225)"/><rect x="383.6" y="220.7" width="5.43" height="5.43" fill="rgb(238,238,238)"/><rect x="389.0" y="220.7" width="5.43" height="5.43" fill="rgb(246,246,246)"/><rect x="394.3" y="220.7" width="5.43" height="5.43" fill="rgb(234,234,234)"/><rect x="399.6" y="220.7" width="5.43" height="5.43" fill="rgb(231,231,231)"/><rect x="405.0" y="220.7" width="5.43" height="5.43" fill="rgb(247,247,247)"/><rect x="410.3" y="220.7" width="5.43" height="5.43" fill="rgb(224,224,224)"/><rect x="415.6" y="220.7" width="5.43" height="5.43" fill="rgb(226,226,226)"/><rect x="421.0" y="220.7" width="5.43" height="5.43" fill="rgb(235,235,235)"/><rect x="426.3" y="220.7" width="5.43" height="5.43" fill="rgb(229,229,229)"/><rect x="431.6" y="220.7" width="5.43" height="5.43" fill="rgb(248,248,248)"/><rect x="437.0" y="220.7" width="5.43" height="5.43" fill="rgb(248,248,248)"/><rect x="357.0" y="226.0" width="5.43" height="5.43" fill="rgb(213,213,213)"/><rect x="362.3" y="226.0" width="5.43" height="5.43" fill="rgb(193,193,193)"/><rect x="367.7" y="226.0" width="5.43" height="5.43" fill="rgb(221,221,221)"/><rect x="373.0" y="226.0" width="5.43" height="5.43" fill="rgb(226,226,226)"/><rect x="378.3" y="226.0" width="5.43" height="5.43" fill="rgb(180,180,180)"/><rect x="383.6" y="226.0" width="5.43" height="5.43" fill="rgb(208,208,208)"/><rect x="389.0" y="226.0" width="5.43" height="5.43" fill="rgb(224,224,224)"/><rect x="394.3" y="226.0" width="5.43" height="5.43" fill="rgb(182,182,182)"/><rect x="399.6" y="226.0" width="5.43" height="5.43" fill="rgb(213,213,213)"/><rect x="405.0" y="226.0" width="5.43" height="5.43" fill="rgb(186,186,186)"/><rect x="410.3" y="226.0" width="5.43" height="5.43" fill="rgb(195,195,195)"/><rect x="415.6" y="226.0" width="5.43" height="5.43" fill="rgb(229,229,229)"/><rect x="421.0" y="226.0" width="5.43" height="5.43" fill="rgb(228,228,228)"/><rect x="426.3" y="226.0" width="5.43" height="5.43" fill="rgb(195,195,195)"/><rect x="431.6" y="226.0" width="5.43" height="5.43" fill="rgb(211,211,211)"/><rect x="437.0" y="226.0" width="5.43" height="5.43" fill="rgb(201,201,201)"/><rect x="357.0" y="231.3" width="5.43" height="5.43" fill="rgb(237,237,237)"/><rect x="362.3" y="231.3" width="5.43" height="5.43" fill="rgb(225,225,225)"/><rect x="367.7" y="231.3" width="5.43" height="5.43" fill="rgb(248,248,248)"/><rect x="373.0" y="231.3" width="5.43" height="5.43" fill="rgb(240,240,240)"/><rect x="378.3" y="231.3" width="5.43" height="5.43" fill="rgb(230,230,230)"/><rect x="383.6" y="231.3" width="5.43" height="5.43" fill="rgb(226,226,226)"/><rect x="389.0" y="231.3" width="5.43" height="5.43" fill="rgb(245,245,245)"/><rect x="394.3" y="231.3" width="5.43" height="5.43" fill="rgb(229,229,229)"/><rect x="399.6" y="231.3" width="5.43" height="5.43" fill="rgb(230,230,230)"/><rect x="405.0" y="231.3" width="5.43" height="5.43" fill="rgb(238,238,238)"/><rect x="410.3" y="231.3" width="5.43" height="5.43" fill="rgb(239,239,239)"/><rect x="415.6" y="231.3" width="5.43" height="5.43" fill="rgb(236,236,236)"/><rect x="421.0" y="231.3" width="5.43" height="5.43" fill="rgb(228,228,228)"/><rect x="426.3" y="231.3" width="5.43" height="5.43" fill="rgb(233,233,233)"/><rect x="431.6" y="231.3" width="5.43" height="5.43" fill="rgb(231,231,231)"/><rect x="437.0" y="231.3" width="5.43" height="5.43" fill="rgb(228,228,228)"/><rect x="493.0" y="224.8" width="5.43" height="5.43" fill="rgb(155,155,155)"/><rect x="498.3" y="224.8" width="5.43" height="5.43" fill="rgb(166,166,166)"/><rect x="503.7" y="224.8" width="5.43" height="5.43" fill="rgb(175,175,175)"/><rect x="509.0" y="224.8" width="5.43" height="5.43" fill="rgb(170,170,170)"/><rect x="514.3" y="224.8" width="5.43" height="5.43" fill="rgb(158,158,158)"/><rect x="519.6" y="224.8" width="5.43" height="5.43" fill="rgb(158,158,158)"/><rect x="525.0" y="224.8" width="5.43" height="5.43" fill="rgb(184,184,184)"/><rect x="493.0" y="230.1" width="5.43" height="5.43" fill="rgb(207,207,207)"/><rect x="498.3" y="230.1" width="5.43" height="5.43" fill="rgb(220,220,220)"/><rect x="503.7" y="230.1" width="5.43" height="5.43" fill="rgb(212,212,212)"/><rect x="509.0" y="230.1" width="5.43" height="5.43" fill="rgb(227,227,227)"/><rect x="514.3" y="230.1" width="5.43" height="5.43" fill="rgb(207,207,207)"/><rect x="519.6" y="230.1" width="5.43" height="5.43" fill="rgb(230,230,230)"/><rect x="525.0" y="230.1" width="5.43" height="5.43" fill="rgb(218,218,218)"/><rect x="230.0" y="262.3" width="5.43" height="5.43" fill="rgb(228,228,228)"/><rect x="235.3" y="262.3" width="5.43" height="5.43" fill="rgb(216,216,216)"/><rect x="240.7" y="262.3" width="5.43" height="5.43" fill="rgb(219,219,219)"/><rect x="246.0" y="262.3" width="5.43" height="5.43" fill="rgb(205,205,205)"/><rect x="230.0" y="267.7" width="5.43" height="5.43" fill="rgb(160,160,160)"/><rect x="235.3" y="267.7" width="5.43" height="5.43" fill="rgb(132,132,132)"/><rect x="240.7" y="267.7" width="5.43" height="5.43" fill="rgb(188,188,188)"/><rect x="246.0" y="267.7" width="5.43" height="5.43" fill="rgb(156,156,156)"/><rect x="230.0" y="273.0" width="5.43" height="5.43" fill="rgb(199,199,199)"/><rect x="235.3" y="273.0" width="5.43" height="5.43" fill="rgb(220,220,220)"/><rect x="240.7" y="273.0" width="5.43" height="5.43" fill="rgb(204,204,204)"/><rect x="246.0" y="273.0" width="5.43" height="5.43" fill="rgb(223,223,223)"/><rect x="256.0" y="262.3" width="5.43" height="5.43" fill="rgb(207,207,207)"/><rect x="261.3" y="262.3" width="5.43" height="5.43" fill="rgb(226,226,226)"/><rect x="266.7" y="262.3" width="5.43" height="5.43" fill="rgb(209,209,209)"/><rect x="272.0" y="262.3" width="5.43" height="5.43" fill="rgb(226,226,226)"/><rect x="256.0" y="267.7" width="5.43" height="5.43" fill="rgb(137,137,137)"/><rect x="261.3" y="267.7" width="5.43" height="5.43" fill="rgb(134,134,134)"/><rect x="266.7" y="267.7" width="5.43" height="5.43" fill="rgb(178,178,178)"/><rect x="272.0" y="267.7" width="5.43" height="5.43" fill="rgb(165,165,165)"/><rect x="256.0" y="273.0" width="5.43" height="5.43" fill="rgb(210,210,210)"/><rect x="261.3" y="273.0" width="5.43" height="5.43" fill="rgb(222,222,222)"/><rect x="266.7" y="273.0" width="5.43" height="5.43" fill="rgb(222,222,222)"/><rect x="272.0" y="273.0" width="5.43" height="5.43" fill="rgb(215,215,215)"/><rect x="364.0" y="262.3" width="5.43" height="5.43" fill="rgb(224,224,224)"/><rect x="369.3" y="262.3" width="5.43" height="5.43" fill="rgb(228,228,228)"/><rect x="374.7" y="262.3" width="5.43" height="5.43" fill="rgb(248,248,248)"/><rect x="380.0" y="262.3" width="5.43" height="5.43" fill="rgb(224,224,224)"/><rect x="385.3" y="262.3" width="5.43" height="5.43" fill="rgb(237,237,237)"/><rect x="390.6" y="262.3" width="5.43" height="5.43" fill="rgb(236,236,236)"/><rect x="396.0" y="262.3" width="5.43" height="5.43" fill="rgb(248,248,248)"/><rect x="401.3" y="262.3" width="5.43" height="5.43" fill="rgb(247,247,247)"/><rect x="406.6" y="262.3" width="5.43" height="5.43" fill="rgb(239,239,239)"/><rect x="412.0" y="262.3" width="5.43" height="5.43" fill="rgb(248,248,248)"/><rect x="417.3" y="262.3" width="5.43" height="5.43" fill="rgb(241,241,241)"/><rect x="364.0" y="267.7" width="5.43" height="5.43" fill="rgb(233,233,233)"/><rect x="369.3" y="267.7" width="5.43" height="5.43" fill="rgb(205,205,205)"/><rect x="374.7" y="267.7" width="5.43" height="5.43" fill="rgb(188,188,188)"/><rect x="380.0" y="267.7" width="5.43" height="5.43" fill="rgb(207,207,207)"/><rect x="385.3" y="267.7" width="5.43" height="5.43" fill="rgb(237,237,237)"/><rect x="390.6" y="267.7" width="5.43" height="5.43" fill="rgb(213,213,213)"/><rect x="396.0" y="267.7" width="5.43" height="5.43" fill="rgb(221,221,221)"/><rect x="401.3" y="267.7" width="5.43" height="5.43" fill="rgb(220,220,220)"/><rect x="406.6" y="267.7" width="5.43" height="5.43" fill="rgb(217,217,217)"/><rect x="412.0" y="267.7" width="5.43" height="5.43" fill="rgb(190,190,190)"/><rect x="417.3" y="267.7" width="5.43" height="5.43" fill="rgb(186,186,186)"/><rect x="364.0" y="273.0" width="5.43" height="5.43" fill="rgb(229,229,229)"/><rect x="369.3" y="273.0" width="5.43" height="5.43" fill="rgb(228,228,228)"/><rect x="374.7" y="273.0" width="5.43" height="5.43" fill="rgb(237,237,237)"/><rect x="380.0" y="273.0" width="5.43" height="5.43" fill="rgb(227,227,227)"/><rect x="385.3" y="273.0" width="5.43" height="5.43" fill="rgb(238,238,238)"/><rect x="390.6" y="273.0" width="5.43" height="5.43" fill="rgb(238,238,238)"/><rect x="396.0" y="273.0" width="5.43" height="5.43" fill="rgb(229,229,229)"/><rect x="401.3" y="273.0" width="5.43" height="5.43" fill="rgb(229,229,229)"/><rect x="406.6" y="273.0" width="5.43" height="5.43" fill="rgb(239,239,239)"/><rect x="412.0" y="273.0" width="5.43" height="5.43" fill="rgb(245,245,245)"/><rect x="417.3" y="273.0" width="5.43" height="5.43" fill="rgb(237,237,237)"/><rect x="493.0" y="266.5" width="5.43" height="5.43" fill="rgb(163,163,163)"/><rect x="498.3" y="266.5" width="5.43" height="5.43" fill="rgb(150,150,150)"/><rect x="503.7" y="266.5" width="5.43" height="5.43" fill="rgb(152,152,152)"/><rect x="509.0" y="266.5" width="5.43" height="5.43" fill="rgb(186,186,186)"/><rect x="514.3" y="266.5" width="5.43" height="5.43" fill="rgb(165,165,165)"/><rect x="519.6" y="266.5" width="5.43" height="5.43" fill="rgb(180,180,180)"/><rect x="525.0" y="266.5" width="5.43" height="5.43" fill="rgb(195,195,195)"/><rect x="493.0" y="271.8" width="5.43" height="5.43" fill="rgb(233,233,233)"/><rect x="498.3" y="271.8" width="5.43" height="5.43" fill="rgb(216,216,216)"/><rect x="503.7" y="271.8" width="5.43" height="5.43" fill="rgb(217,217,217)"/><rect x="509.0" y="271.8" width="5.43" height="5.43" fill="rgb(219,219,219)"/><rect x="514.3" y="271.8" width="5.43" height="5.43" fill="rgb(211,211,211)"/><rect x="519.6" y="271.8" width="5.43" height="5.43" fill="rgb(211,211,211)"/><rect x="525.0" y="271.8" width="5.43" height="5.43" fill="rgb(213,213,213)"/><rect x="230.0" y="304.0" width="5.43" height="5.43" fill="rgb(224,224,224)"/><rect x="235.3" y="304.0" width="5.43" height="5.43" fill="rgb(204,204,204)"/><rect x="240.7" y="304.0" width="5.43" height="5.43" fill="rgb(207,207,207)"/><rect x="246.0" y="304.0" width="5.43" height="5.43" fill="rgb(215,215,215)"/><rect x="230.0" y="309.3" width="5.43" height="5.43" fill="rgb(170,170,170)"/><rect x="235.3" y="309.3" width="5.43" height="5.43" fill="rgb(155,155,155)"/><rect x="240.7" y="309.3" width="5.43" height="5.43" fill="rgb(171,171,171)"/><rect x="246.0" y="309.3" width="5.43" height="5.43" fill="rgb(170,170,170)"/><rect x="230.0" y="314.7" width="5.43" height="5.43" fill="rgb(223,223,223)"/><rect x="235.3" y="314.7" width="5.43" height="5.43" fill="rgb(205,205,205)"/><rect x="240.7" y="314.7" width="5.43" height="5.43" fill="rgb(224,224,224)"/><rect x="246.0" y="314.7" width="5.43" height="5.43" fill="rgb(219,219,219)"/><rect x="256.0" y="304.0" width="5.43" height="5.43" fill="rgb(224,224,224)"/><rect x="261.3" y="304.0" width="5.43" height="5.43" fill="rgb(227,227,227)"/><rect x="266.7" y="304.0" width="5.43" height="5.43" fill="rgb(225,225,225)"/><rect x="272.0" y="304.0" width="5.43" height="5.43" fill="rgb(199,199,199)"/><rect x="256.0" y="309.3" width="5.43" height="5.43" fill="rgb(188,188,188)"/><rect x="261.3" y="309.3" width="5.43" height="5.43" fill="rgb(176,176,176)"/><rect x="266.7" y="309.3" width="5.43" height="5.43" fill="rgb(169,169,169)"/><rect x="272.0" y="309.3" width="5.43" height="5.43" fill="rgb(143,143,143)"/><rect x="256.0" y="314.7" width="5.43" height="5.43" fill="rgb(202,202,202)"/><rect x="261.3" y="314.7" width="5.43" height="5.43" fill="rgb(224,224,224)"/><rect x="266.7" y="314.7" width="5.43" height="5.43" fill="rgb(205,205,205)"/><rect x="272.0" y="314.7" width="5.43" height="5.43" fill="rgb(213,213,213)"/><rect x="364.0" y="304.0" width="5.43" height="5.43" fill="rgb(248,248,248)"/><rect x="369.3" y="304.0" width="5.43" height="5.43" fill="rgb(229,229,229)"/><rect x="374.7" y="304.0" width="5.43" height="5.43" fill="rgb(233,233,233)"/><rect x="380.0" y="304.0" width="5.43" height="5.43" fill="rgb(230,230,230)"/><rect x="385.3" y="304.0" width="5.43" height="5.43" fill="rgb(234,234,234)"/><rect x="390.6" y="304.0" width="5.43" height="5.43" fill="rgb(239,239,239)"/><rect x="396.0" y="304.0" width="5.43" height="5.43" fill="rgb(226,226,226)"/><rect x="401.3" y="304.0" width="5.43" height="5.43" fill="rgb(236,236,236)"/><rect x="406.6" y="304.0" width="5.43" height="5.43" fill="rgb(227,227,227)"/><rect x="412.0" y="304.0" width="5.43" height="5.43" fill="rgb(242,242,242)"/><rect x="417.3" y="304.0" width="5.43" height="5.43" fill="rgb(248,248,248)"/><rect x="422.6" y="304.0" width="5.43" height="5.43" fill="rgb(224,224,224)"/><rect x="428.0" y="304.0" width="5.43" height="5.43" fill="rgb(240,240,240)"/><rect x="364.0" y="309.3" width="5.43" height="5.43" fill="rgb(210,210,210)"/><rect x="369.3" y="309.3" width="5.43" height="5.43" fill="rgb(224,224,224)"/><rect x="374.7" y="309.3" width="5.43" height="5.43" fill="rgb(217,217,217)"/><rect x="380.0" y="309.3" width="5.43" height="5.43" fill="rgb(224,224,224)"/><rect x="385.3" y="309.3" width="5.43" height="5.43" fill="rgb(183,183,183)"/><rect x="390.6" y="309.3" width="5.43" height="5.43" fill="rgb(206,206,206)"/><rect x="396.0" y="309.3" width="5.43" height="5.43" fill="rgb(235,235,235)"/><rect x="401.3" y="309.3" width="5.43" height="5.43" fill="rgb(231,231,231)"/><rect x="406.6" y="309.3" width="5.43" height="5.43" fill="rgb(216,216,216)"/><rect x="412.0" y="309.3" width="5.43" height="5.43" fill="rgb(185,185,185)"/><rect x="417.3" y="309.3" width="5.43" height="5.43" fill="rgb(219,219,219)"/><rect x="422.6" y="309.3" width="5.43" height="5.43" fill="rgb(228,228,228)"/><rect x="428.0" y="309.3" width="5.43" height="5.43" fill="rgb(206,206,206)"/><rect x="364.0" y="314.7" width="5.43" height="5.43" fill="rgb(224,224,224)"/><rect x="369.3" y="314.7" width="5.43" height="5.43" fill="rgb(248,248,248)"/><rect x="374.7" y="314.7" width="5.43" height="5.43" fill="rgb(226,226,226)"/><rect x="380.0" y="314.7" width="5.43" height="5.43" fill="rgb(233,233,233)"/><rect x="385.3" y="314.7" width="5.43" height="5.43" fill="rgb(248,248,248)"/><rect x="390.6" y="314.7" width="5.43" height="5.43" fill="rgb(248,248,248)"/><rect x="396.0" y="314.7" width="5.43" height="5.43" fill="rgb(245,245,245)"/><rect x="401.3" y="314.7" width="5.43" height="5.43" fill="rgb(241,241,241)"/><rect x="406.6" y="314.7" width="5.43" height="5.43" fill="rgb(224,224,224)"/><rect x="412.0" y="314.7" width="5.43" height="5.43" fill="rgb(248,248,248)"/><rect x="417.3" y="314.7" width="5.43" height="5.43" fill="rgb(240,240,240)"/><rect x="422.6" y="314.7" width="5.43" height="5.43" fill="rgb(234,234,234)"/><rect x="428.0" y="314.7" width="5.43" height="5.43" fill="rgb(227,227,227)"/><rect x="493.0" y="308.2" width="5.43" height="5.43" fill="rgb(185,185,185)"/><rect x="498.3" y="308.2" width="5.43" height="5.43" fill="rgb(194,194,194)"/><rect x="503.7" y="308.2" width="5.43" height="5.43" fill="rgb(195,195,195)"/><rect x="509.0" y="308.2" width="5.43" height="5.43" fill="rgb(173,173,173)"/><rect x="514.3" y="308.2" width="5.43" height="5.43" fill="rgb(165,165,165)"/><rect x="519.6" y="308.2" width="5.43" height="5.43" fill="rgb(156,156,156)"/><rect x="525.0" y="308.2" width="5.43" height="5.43" fill="rgb(163,163,163)"/><rect x="493.0" y="313.5" width="5.43" height="5.43" fill="rgb(214,214,214)"/><rect x="498.3" y="313.5" width="5.43" height="5.43" fill="rgb(214,214,214)"/><rect x="503.7" y="313.5" width="5.43" height="5.43" fill="rgb(230,230,230)"/><rect x="509.0" y="313.5" width="5.43" height="5.43" fill="rgb(213,213,213)"/><rect x="514.3" y="313.5" width="5.43" height="5.43" fill="rgb(230,230,230)"/><rect x="519.6" y="313.5" width="5.43" height="5.43" fill="rgb(224,224,224)"/><rect x="525.0" y="313.5" width="5.43" height="5.43" fill="rgb(207,207,207)"/></svg>
<div class="row" style="top:0.00px"><div class="cb" style="left:10px;top:14.600px"></div><div class="t td" style="left:47px;top:15px">2</div><div class="t td" style="left:758px;top:15px">有効</div></div>
<div class="row" style="top:41.67px"><div class="cb" style="left:10px;top:14.600px"></div><div class="t td" style="left:47px;top:15px">2</div><div class="t td" style="left:758px;top:15px">有効</div></div>
<div class="row" style="top:83.34px"><div class="cb" style="left:10px;top:14.600px"></div><div class="t td" style="left:47px;top:15px">2</div><div class="t td" style="left:758px;top:15px">有効</div><div class="t td" style="left:954px;top:15px">1</div><div class="dots" style="left:985px;top:19px"><b></b><b></b><b></b></div></div>
<div class="row" style="top:125.01px"><div class="cb" style="left:10px;top:14.600px"></div><div class="t td" style="left:47px;top:15px">2</div><div class="t td" style="left:758px;top:15px">有効</div><div class="t td" style="left:954px;top:15px">1</div><div class="dots" style="left:985px;top:19px"><b></b><b></b><b></b></div></div>
<div class="row" style="top:166.68px"><div class="cb" style="left:10px;top:14.600px"></div><div class="t td" style="left:47px;top:15px">2</div><div class="t td" style="left:758px;top:15px">有効</div><div class="t td" style="left:954px;top:15px">1</div><div class="dots" style="left:985px;top:19px"><b></b><b></b><b></b></div></div>
<div class="row" style="top:208.35px"><div class="cb" style="left:10px;top:14.600px"></div><div class="t td" style="left:47px;top:15px">2</div><div class="t td" style="left:758px;top:15px">有効</div><div class="t td" style="left:954px;top:15px">1</div><div class="dots" style="left:985px;top:19px"><b></b><b></b><b></b></div></div>
<div class="row" style="top:250.02px"><div class="cb" style="left:10px;top:14.600px"></div><div class="t td" style="left:47px;top:15px">2</div><div class="t td" style="left:758px;top:15px">有効</div><div class="t td" style="left:954px;top:15px">1</div><div class="dots" style="left:985px;top:19px"><b></b><b></b><b></b></div></div>
<div class="row" style="top:291.69px"><div class="cb" style="left:10px;top:14.600px"></div><div class="t td" style="left:47px;top:15px">2</div><div class="t td" style="left:758px;top:15px">有効</div><div class="t td" style="left:954px;top:15px">1</div><div class="dots" style="left:985px;top:19px"><b></b><b></b><b></b></div></div>
</div>
<!-- scrollbar -->
<div class="abs" style="left:1248px;top:340px;width:15px;height:317px;background:#f0f1f2"></div>
<div class="abs" style="left:1250.5px;top:351px;width:8px;height:19px;background:#c1c1c1"></div>
<div class="abs" style="left:1251.5px;top:344px;border:3px solid transparent;border-bottom:3.5px solid #666;border-top:0"></div>
<div class="abs" style="left:1251px;top:650px;border:3px solid transparent;border-top:3.5px solid #444;border-bottom:0"></div>
<div id="menu" class="abs">
<div class="t" style="top:20.5px">変更</div>
<div class="t" style="top:60.5px">削除</div>
<div class="t" style="top:100.5px">パスワード初期化</div>
<div class="t" style="top:140.5px">ライセンス付与</div>
<div class="t" style="top:180.5px">所有ライセンス一覧</div>
<div class="t" style="top:220.5px">登録クラス一覧</div>
<div class="t" style="top:260.5px">転出処理</div>
<div class="t" style="top:300.5px">卒業処理</div>
</div>
<div class="ob" style="left:1098px;top:337px;width:105px;height:47px"></div>
<div class="ob" style="left:1199px;top:429px;width:49px;height:34px"></div>
<div id="fab" class="abs"></div>
<svg style="left:1237px;top:677px" width="12" height="12" viewBox="0 0 12 12" stroke="#fff" stroke-width="1.8"><path d="M6 0v12M0 6h12"/></svg>
</body>
</html>
